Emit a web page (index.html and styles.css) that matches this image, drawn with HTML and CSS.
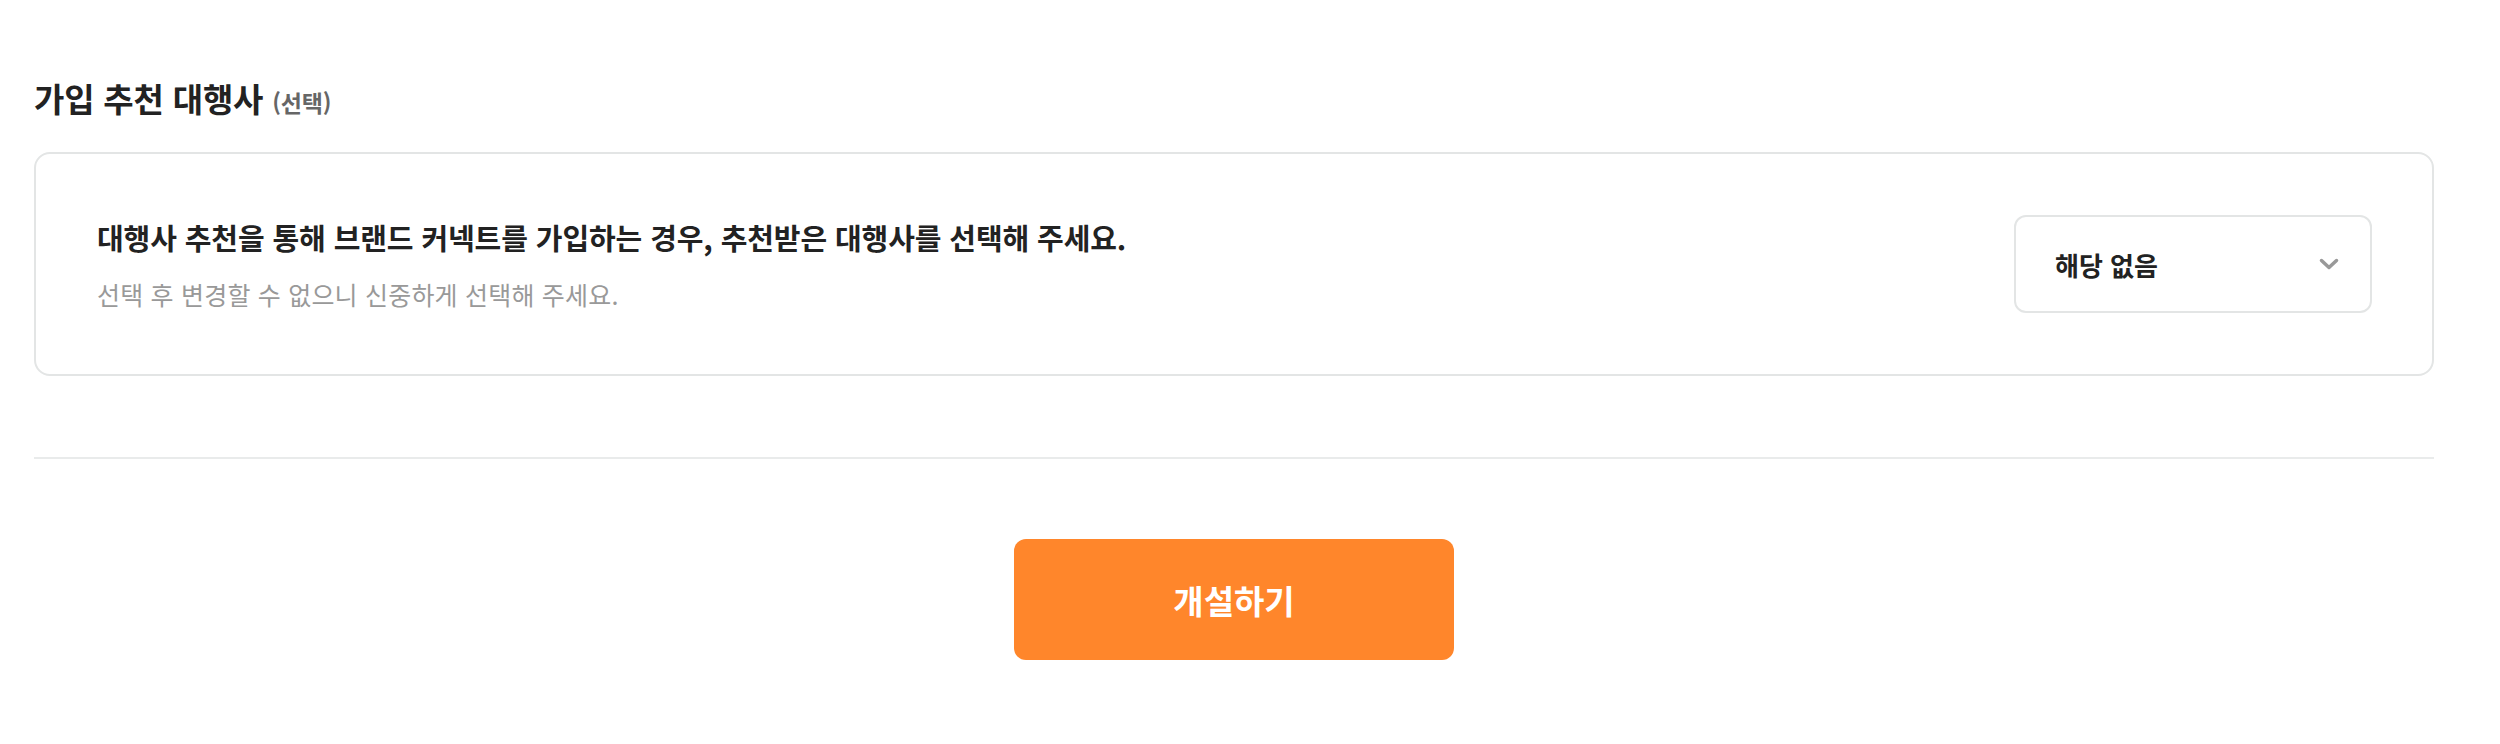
FILE: index.html
```html
<!DOCTYPE html>
<html lang="ko">
<head>
<meta charset="utf-8">
<title>가입 추천 대행사</title>
<link rel="stylesheet" href="styles.css">
</head>
<body>
<main class="page">
  <section class="section">
    <h2 class="section-title">가입 추천 대행사 <span class="optional">(선택)</span></h2>
    <div class="card">
      <div class="card-text">
        <p class="card-main">대행사 추천을 통해 브랜드 커넥트를 가입하는 경우, 추천받은 대행사를 선택해 주세요.</p>
        <p class="card-sub">선택 후 변경할 수 없으니 신중하게 선택해 주세요.</p>
      </div>
      <button class="select" type="button">
        <span class="select-value">해당 없음</span>
        <svg class="chevron" width="20" height="12" viewBox="0 0 20 12" aria-hidden="true">
          <path d="M2.5 2.5 L10 9.5 L17.5 2.5" fill="none" stroke="#999" stroke-width="3.5" stroke-linecap="round" stroke-linejoin="round"/>
        </svg>
      </button>
    </div>
  </section>
  <hr class="divider">
  <div class="actions">
    <button class="submit" type="button">개설하기</button>
  </div>
</main>
</body>
</html>
```
FILE: styles.css
```css
* { box-sizing: border-box; }
html, body { margin: 0; padding: 0; background: #fff; }
body {
  font-family: "Noto Sans CJK KR", "Noto Sans", sans-serif;
  color: #222;
}
.page {
  padding: 75px 66px 0 34px;
}
.section-title {
  margin: 0;
  font-size: 33px;
  font-weight: 700;
  line-height: 46px;
  letter-spacing: -0.2px;
  color: #222;
}
.optional {
  margin-left: 0;
  font-size: 23px;
  font-weight: 700;
  color: #666;
}
.card {
  margin-top: 27px;
  border: 2px solid #e3e5e5;
  border-radius: 16px;
  padding: 61px 60px 61px 61px;
  display: flex;
  align-items: center;
  justify-content: space-between;
}
.card-text { display: flex; flex-direction: column; gap: 21px; }
.card-main {
  margin: 0;
  font-size: 29px;
  font-weight: 700;
  line-height: 38px;
  letter-spacing: -0.1px;
  color: #222;
}
.card-sub {
  margin: 0;
  font-size: 25px;
  font-weight: 400;
  line-height: 34px;
  letter-spacing: 0.2px;
  color: #999;
}
.select {
  width: 358px;
  height: 98px;
  border: 2px solid #e3e5e5;
  border-radius: 12px;
  background: #fff;
  padding: 0 31px 0 39px;
  display: flex;
  align-items: center;
  justify-content: space-between;
  font-family: inherit;
  cursor: pointer;
}
.select-value {
  font-size: 26px;
  font-weight: 700;
  color: #222;
}
.chevron { display: block; }
.divider {
  margin: 81px 0 0;
  border: 0;
  height: 2px;
  background: #e9ebeb;
}
.actions {
  display: flex;
  justify-content: center;
  padding-top: 80px;
}
.submit {
  width: 440px;
  height: 121px;
  border: 0;
  border-radius: 12px;
  background: #ff862b;
  color: #fff;
  font-family: inherit;
  font-size: 33px;
  font-weight: 700;
  cursor: pointer;
}
```
